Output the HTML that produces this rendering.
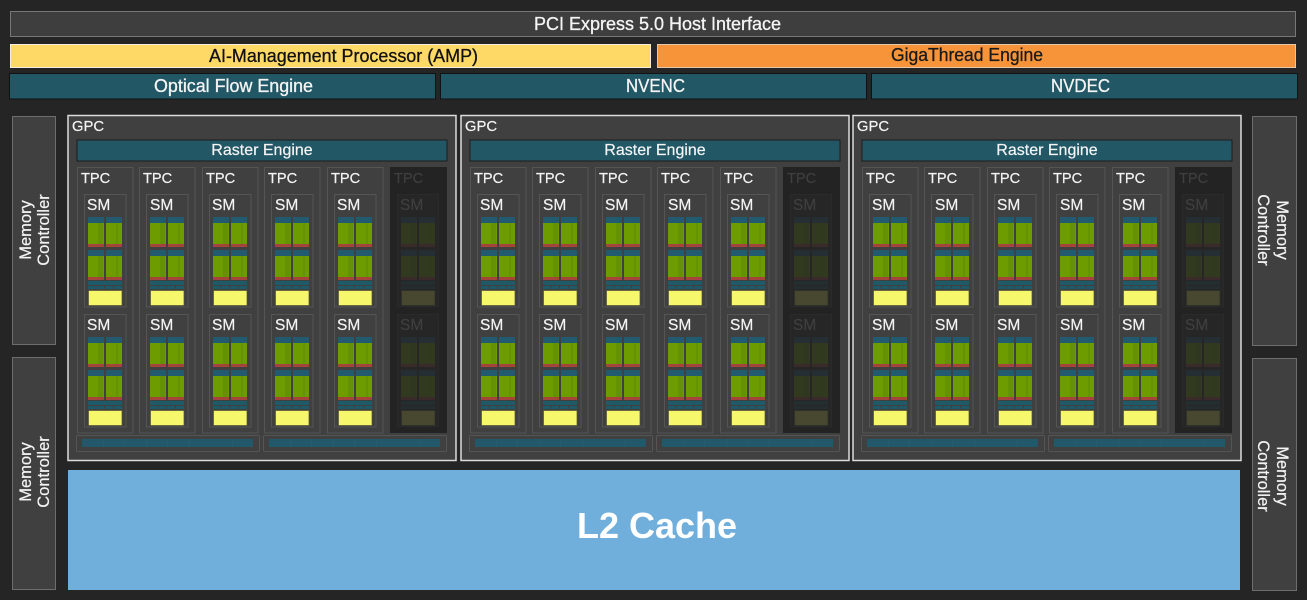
<!DOCTYPE html>
<html><head><meta charset="utf-8"><style>
html,body{margin:0;padding:0;background:#252525;width:1307px;height:600px;overflow:hidden}
svg{display:block}
text{font-family:"Liberation Sans",sans-serif;fill:#f4f4f4;font-weight:400;stroke:#f4f4f4;stroke-width:.2px}
.h{font-size:18px;text-anchor:middle;stroke-width:.3px}
.g{font-size:14.8px}.r{font-size:16px;text-anchor:middle}
.t{font-size:14.6px}.s{font-size:15.5px}.d{fill:#3f3f3f;stroke:#3f3f3f}
.m{font-size:16.5px;text-anchor:middle}
</style></head><body>
<svg width="1307" height="600" viewBox="0 0 1307 600" xmlns="http://www.w3.org/2000/svg">
<defs>
<g id="col1">
<rect x="0" y="0" width="16" height="6" fill="#225a70"/>
<rect x="0" y="6" width="16" height="21" fill="#6c9c00"/>
<rect x="10" y="6" width="5" height="21" fill="#649106"/>
<rect x="0" y="27" width="16" height="3" fill="#a5443a"/>
</g>
<g id="col2">
<rect x="0" y="0" width="16" height="6" fill="#225a70"/>
<rect x="0" y="6" width="16" height="21" fill="#6c9c00"/>
<rect x="10.500" y="6" width="1" height="21" fill="#5f8a0c"/>
<rect x="0" y="27" width="16" height="3" fill="#a5443a"/>
</g>
<g id="block">
<use href="#col1" x="88" y="217"/><use href="#col2" x="106" y="217"/>
<use href="#col1" x="88" y="250"/><use href="#col2" x="106" y="250"/>
<rect x="88" y="281" width="34" height="4" fill="#1e5a68"/>
<rect x="88" y="286" width="7.500" height="3" fill="#1e5a68"/><rect x="96.500" y="286" width="7.500" height="3" fill="#1e5a68"/><rect x="105" y="286" width="8" height="3" fill="#1e5a68"/><rect x="114" y="286" width="8" height="3" fill="#1e5a68"/>
<rect x="88.500" y="290.500" width="33.500" height="15" fill="#f6f76a" stroke="#55553a" stroke-width=".7"/>
</g>
<g id="sm">
<rect x="84.500" y="194.500" width="41.500" height="112.500" fill="#404040" stroke="#555"/>
<use href="#block"/>
</g>
<g id="dsm" opacity=".16">
<use href="#block"/>
</g>
<g id="tpc">
<rect x="77.500" y="167.500" width="55.500" height="265.500" fill="#404040" stroke="#555"/>
<use href="#sm"/><use href="#sm" y="120"/>
</g>
<g id="bar">
<rect x="76.500" y="435.500" width="183" height="16" rx="1" fill="#404040" stroke="#555"/>
<rect x="82" y="439" width="171" height="8" fill="#22586a"/>
<path d="M103.500 439v8M124.500 439v8M146.500 439v8M167.500 439v8M189.500 439v8M232.500 439v8" stroke="#2a5f70" stroke-width=".7"/>
</g>
<g id="gpc">
<rect x="68" y="115.500" width="388" height="345" fill="#404040" stroke="#dcdcdc" stroke-width="1.500"/>
<rect x="77" y="140" width="370" height="21" fill="#225766" stroke="#1c1c1c"/>
<use href="#tpc"/><use href="#tpc" x="62"/><use href="#tpc" x="125"/><use href="#tpc" x="187"/><use href="#tpc" x="250"/>
<rect x="390" y="167" width="57" height="266" fill="#232323"/>
<rect x="397.500" y="194.500" width="41" height="112" fill="#262626" stroke="#2a2a2a"/>
<rect x="397.500" y="314.500" width="41" height="112" fill="#262626" stroke="#2a2a2a"/>
<use href="#dsm" x="313"/><use href="#dsm" x="313" y="120"/>
<use href="#bar"/><use href="#bar" x="187"/>
</g>
</defs>

<rect x="0" y="0" width="1307" height="600" fill="#252525"/>
<rect x="10.500" y="11.500" width="1285" height="25" fill="#3e3e3e" stroke="#777"/>
<text class="h" x="657.500" y="30">PCI Express 5.0 Host Interface</text>
<rect x="10.500" y="44.500" width="640" height="23" fill="#ffd966" stroke="#f3eedb"/>
<text class="h" x="343.500" y="62" textLength="269" lengthAdjust="spacingAndGlyphs" style="fill:#111;stroke:#111">AI-Management Processor (AMP)</text>
<rect x="657.500" y="44.500" width="638" height="23" fill="#f79439" stroke="#e3c8ac"/>
<text class="h" x="967" y="61" textLength="152" lengthAdjust="spacingAndGlyphs" style="fill:#1a1a1a;stroke:#1a1a1a">GigaThread Engine</text>
<g fill="#225766" stroke="#121212">
<rect x="9.500" y="73.500" width="426" height="25.500"/>
<rect x="440.500" y="73.500" width="426" height="25.500"/>
<rect x="871.500" y="73.500" width="426" height="25.500"/>
</g>
<text class="h" x="233.500" y="92" textLength="159" lengthAdjust="spacingAndGlyphs">Optical Flow Engine</text>
<text class="h" x="655.500" y="92" textLength="59" lengthAdjust="spacingAndGlyphs">NVENC</text>
<text class="h" x="1080.500" y="92" textLength="59" lengthAdjust="spacingAndGlyphs">NVDEC</text>

<g fill="#404040" stroke="#6d6d6d">
<rect x="12.500" y="116.500" width="43" height="228"/>
<rect x="12.500" y="357.500" width="43" height="232"/>
<rect x="1252.500" y="116.500" width="44" height="229"/>
<rect x="1252.500" y="358.500" width="44" height="232"/>
</g>
<text class="m" transform="translate(31,230) rotate(-90)">Memory</text>
<text class="m" transform="translate(49,230) rotate(-90)">Controller</text>
<text class="m" transform="translate(31,472) rotate(-90)">Memory</text>
<text class="m" transform="translate(49,472) rotate(-90)">Controller</text>
<text class="m" transform="translate(1277,230) rotate(90)">Memory</text>
<text class="m" transform="translate(1258,230) rotate(90)">Controller</text>
<text class="m" transform="translate(1277,476) rotate(90)">Memory</text>
<text class="m" transform="translate(1258,476) rotate(90)">Controller</text>

<use href="#gpc"/><use href="#gpc" x="393"/><use href="#gpc" x="785"/>

<g>
<text class="g" x="72" y="131">GPC</text>
<text class="r" x="262" y="155">Raster Engine</text>
<text class="t" x="81" y="183">TPC</text><text class="t" x="143" y="183">TPC</text><text class="t" x="206" y="183">TPC</text><text class="t" x="268" y="183">TPC</text><text class="t" x="331" y="183">TPC</text><text class="t d" x="394" y="183">TPC</text>
<text class="s" x="87" y="210">SM</text><text class="s" x="150" y="210">SM</text><text class="s" x="212" y="210">SM</text><text class="s" x="275" y="210">SM</text><text class="s" x="337" y="210">SM</text><text class="s d" x="400" y="210">SM</text>
<text class="s" x="87" y="330">SM</text><text class="s" x="150" y="330">SM</text><text class="s" x="212" y="330">SM</text><text class="s" x="275" y="330">SM</text><text class="s" x="337" y="330">SM</text><text class="s d" x="400" y="330">SM</text>
</g>
<g transform="translate(393)">
<text class="g" x="72" y="131">GPC</text>
<text class="r" x="262" y="155">Raster Engine</text>
<text class="t" x="81" y="183">TPC</text><text class="t" x="143" y="183">TPC</text><text class="t" x="206" y="183">TPC</text><text class="t" x="268" y="183">TPC</text><text class="t" x="331" y="183">TPC</text><text class="t d" x="394" y="183">TPC</text>
<text class="s" x="87" y="210">SM</text><text class="s" x="150" y="210">SM</text><text class="s" x="212" y="210">SM</text><text class="s" x="275" y="210">SM</text><text class="s" x="337" y="210">SM</text><text class="s d" x="400" y="210">SM</text>
<text class="s" x="87" y="330">SM</text><text class="s" x="150" y="330">SM</text><text class="s" x="212" y="330">SM</text><text class="s" x="275" y="330">SM</text><text class="s" x="337" y="330">SM</text><text class="s d" x="400" y="330">SM</text>
</g>
<g transform="translate(785)">
<text class="g" x="72" y="131">GPC</text>
<text class="r" x="262" y="155">Raster Engine</text>
<text class="t" x="81" y="183">TPC</text><text class="t" x="143" y="183">TPC</text><text class="t" x="206" y="183">TPC</text><text class="t" x="268" y="183">TPC</text><text class="t" x="331" y="183">TPC</text><text class="t d" x="394" y="183">TPC</text>
<text class="s" x="87" y="210">SM</text><text class="s" x="150" y="210">SM</text><text class="s" x="212" y="210">SM</text><text class="s" x="275" y="210">SM</text><text class="s" x="337" y="210">SM</text><text class="s d" x="400" y="210">SM</text>
<text class="s" x="87" y="330">SM</text><text class="s" x="150" y="330">SM</text><text class="s" x="212" y="330">SM</text><text class="s" x="275" y="330">SM</text><text class="s" x="337" y="330">SM</text><text class="s d" x="400" y="330">SM</text>
</g>

<rect x="68" y="470" width="1172" height="120" fill="#70afdc"/>
<text x="657" y="538" text-anchor="middle" style="font-size:36px;font-weight:700;fill:#fff;stroke:none">L2 Cache</text>
</svg>
</body></html>
